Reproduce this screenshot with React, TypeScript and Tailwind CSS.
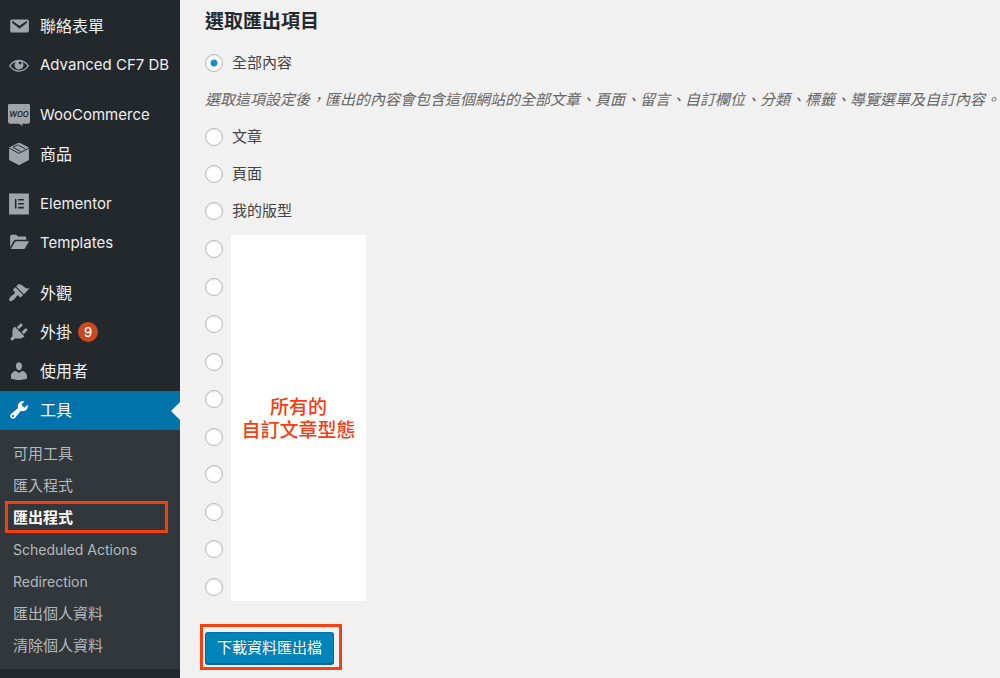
import React, { useState } from "react";
import clsx from "clsx";

interface MenuItem {
    label: string;
    icon: React.ReactNode;
    badge?: number;
}

const Icon = ({ children }: { children: React.ReactNode }) => (
    <svg viewBox="0 0 20 20" className="h-[22px] w-[22px] shrink-0" fill="currentColor" aria-hidden="true">
        {children}
    </svg>
);

// Latin labels are set one step smaller than the Chinese ones
const isLatin = (label: string) => /^[A-Z]/.test(label);

const menuGroups: MenuItem[][] = [
    [
        {
            label: "聯絡表單",
            icon: <path d="M3.87 4h13.25C18.37 4 19 4.59 19 5.79v8.42c0 1.19-.63 1.79-1.88 1.79H3.87c-1.25 0-1.88-.6-1.88-1.79V5.79c0-1.2.63-1.79 1.88-1.79zm6.62 8.6l6.74-5.53c.24-.2.43-.66.13-1.07-.29-.41-.82-.42-1.17-.17l-5.7 3.86L4.8 5.83c-.35-.25-.88-.24-1.17.17-.3.41-.11.87.13 1.07z" />,
        },
        {
            label: "Advanced CF7 DB",
            icon: <path fillRule="evenodd" d="M18.3 9.5C15 4.9 8.5 3.8 3.9 7.2c-1.2.9-2.2 2.1-3 3.4.2.4.5.8.8 1.2 3.3 4.6 9.6 5.6 14.2 2.4.9-.7 1.7-1.4 2.4-2.4.3-.4.5-.8.8-1.2-.3-.4-.5-.8-.8-1.1zm-8.2-2.3c.5-.5 1.3-.5 1.8 0s.5 1.3 0 1.8-1.3.5-1.8 0-.5-1.3 0-1.8zm-.1 7.7c-3.1 0-6-1.6-7.7-4.2C3.5 9 5.1 7.8 7 7.2c-.7.8-1 1.7-1 2.7 0 2.2 1.7 4.1 4 4.1 2.2 0 4.1-1.7 4.1-4v-.1c0-1-.4-2-1.1-2.7 1.9.6 3.5 1.8 4.7 3.5-1.7 2.6-4.6 4.2-7.7 4.2z" />,
        },
    ],
    [
        {
            label: "WooCommerce",
            icon: (
                <>
                    <path d="M2 -.5h16a2 2 0 0 1 2 2v14.500a2 2 0 0 1-2 2h-5.200l.6 2.200-3.400-2.200H2a2 2 0 0 1-2-2V1.500a2 2 0 0 1 2-2z" />
                    <text x="10" y="11.500" textAnchor="middle" fontSize="7" fontWeight="600" fontStyle="italic" fontFamily="Inter, sans-serif" fill="#23282d">WOO</text>
                </>
            ),
        },
        {
            label: "商品",
            icon: (
                <>
                    <path d="M10 -.5l9 4.500v11.500L10 20.200 1 15.500V4z" />
                    <path d="M1 4.600l9 4.900 9-4.900M4.500 4l7 3.700M9.500 2l6 3.300M4.500 4l4.500-2.400" fill="none" stroke="#23282d" strokeWidth=".9" />
                </>
            ),
        },
    ],
    [
        {
            label: "Elementor",
            icon: <path fillRule="evenodd" d="M1 .5h18v19H1zM6.300 5.500V14h1.400V5.500zM9.200 5.500v1.400h5.200V5.500zM9.200 9v1.400h5.200V9zM9.200 12.600V14h5.200v-1.400z" />,
        },
        {
            label: "Templates",
            icon: (
                <>
                    <path d="M2 14V4C2 3.200 2.600 2.500 3.400 2.500h3.800c.8 0 1.300.7 1.600 1.600h6.500c.8 0 1.300.5 1.300 1.300v1.600H7.300c-1 0-1.800.5-2.400 1.400z" />
                    <path d="M2.500 15.400l3.400-5.600c.4-.8 1-1.300 1.900-1.300H19.200l-3.500 5.800c-.4.700-.9 1.100-1.700 1.100z" />
                </>
            ),
        },
    ],
    [
        {
            label: "外觀",
            icon: <path d="M14.48 11.06L7.41 3.99l1.5-1.5c.5-.56 2.3-.47 3.51.32 1.21.8 1.43 1.28 2.91 2.1 1.18.64 2.45 1.26 4.45.85zm-.71.71L6.7 4.7 4.93 6.47c-.39.39-.39 1.02 0 1.41l1.06 1.06c.39.39.39 1.03 0 1.42-.6.6-1.43 1.11-2.21 1.69-.35.26-.7.53-1.01.84C1.43 14.23.4 16.08 1.4 17.07c.99 1 2.84-.03 4.18-1.36.31-.31.58-.66.85-1.02.57-.78 1.08-1.61 1.69-2.21.39-.39 1.02-.39 1.41 0l1.06 1.06c.39.39 1.02.39 1.41 0z" />,
        },
        {
            label: "外掛",
            badge: 9,
            icon: <path d="M13.11 4.36L9.87 7.6 8 5.73l3.24-3.24c.35-.34 1.05-.2 1.56.32.52.51.66 1.21.31 1.55zm-8 1.77l.91-1.12 9.01 9.01-1.19.84c-.71.71-2.63 1.16-3.82 1.16H6.14L4.9 17.26c-.59.59-1.54.59-2.12 0-.59-.58-.59-1.53 0-2.12l1.24-1.24v-3.88c0-1.13.4-3.19 1.09-3.89zm7.26 3.97l3.24-3.24c.34-.35 1.04-.21 1.55.31.52.51.66 1.21.31 1.55l-3.24 3.25z" />,
        },
        {
            label: "使用者",
            icon: <path d="M10 9.25c-2.27 0-2.73-3.44-2.73-3.44C7 4.02 7.82 2 9.97 2c2.16 0 2.98 2.02 2.71 3.81 0 0-.41 3.44-2.68 3.44zm0 2.57L12.72 10c2.39 0 4.52 2.33 4.52 4.53v2.49s-3.65 1.13-7.24 1.13c-3.65 0-7.24-1.13-7.24-1.13v-2.49c0-2.25 1.94-4.48 4.47-4.48z" />,
        },
        {
            label: "工具",
            icon: <path d="M16.68 9.77c-1.34 1.34-3.3 1.67-4.95.99l-5.41 6.52c-.99.99-2.59.99-3.58 0s-.99-2.59 0-3.57l6.52-5.42c-.68-1.65-.35-3.61.99-4.95 1.28-1.28 3.12-1.62 4.72-1.06l-2.89 2.89 2.82 2.82 2.86-2.87c.53 1.58.18 3.39-1.08 4.65zM3.81 16.21c.4.39 1.04.39 1.43 0 .4-.4.4-1.04 0-1.43-.39-.4-1.03-.4-1.43 0-.39.39-.39 1.03 0 1.43z" />,
        },
    ],
];

const subMenu = ["可用工具", "匯入程式", "匯出程式", "Scheduled Actions", "Redirection", "匯出個人資料", "清除個人資料"];

const contentTypes = ["文章", "頁面", "我的版型"];

const customTypes = Array.from({ length: 10 }, (_, i) => `custom-${i}`);

const Sidebar = () => (
    <nav className="w-[180px] shrink-0 bg-[#23282d] pt-[7px]">
        <div className="flex flex-col gap-[11px]">
            {menuGroups.map((group, index) => (
                <ul key={index}>
                    {group.map((item) => {
                        const isActive = item.label === "工具";
                        return (
                            <li key={item.label} className="relative">
                                <a
                                    href="#"
                                    className={clsx(
                                        "flex h-[39px] items-center gap-[10px] pb-px pl-2 leading-5 whitespace-nowrap",
                                        isLatin(item.label) ? "text-[15px]" : "text-[16px]",
                                        isActive ? "bg-[#0073aa] text-white" : "text-[#eeeeee]"
                                    )}
                                >
                                    <span className={isActive ? "text-white" : "text-[#a0a5aa]"}>
                                        <Icon>{item.icon}</Icon>
                                    </span>
                                    <span>{item.label}</span>
                                    {item.badge && (
                                        <span className="-ml-1 flex h-5 w-5 items-center justify-center rounded-full bg-[#ca4a1f] text-[13px] font-medium text-white">
                                            {item.badge}
                                        </span>
                                    )}
                                </a>
                                {isActive && (
                                    <svg viewBox="0 0 9 18" className="absolute top-[11px] right-0 h-[18px] w-[9px]" aria-hidden="true">
                                        <path d="M9 0v18L0 9z" fill="#f1f1f1" />
                                    </svg>
                                )}
                            </li>
                        );
                    })}
                </ul>
            ))}
        </div>
        <ul className="bg-[#32373c] pt-[7px] pb-2">
            {subMenu.map((label) => {
                const isCurrent = label === "匯出程式";
                return (
                    <li key={label} className="relative">
                        <a
                            href="#"
                            className={clsx(
                                "flex h-8 items-center pt-px pl-[13px] leading-5 whitespace-nowrap",
                                isLatin(label) ? "text-[14px]" : "text-[15px]",
                                isCurrent ? "font-bold text-white" : "text-[#b4b9be]"
                            )}
                        >
                            {label}
                        </a>
                        {isCurrent && <span className="pointer-events-none absolute inset-y-0 right-3 left-[5px] border-3 border-[#f7400f]" />}
                    </li>
                );
            })}
        </ul>
    </nav>
);

const radioClass =
    "m-0 h-[18px] w-[18px] shrink-0 appearance-none rounded-full border border-[#b4b9be] bg-white shadow-[inset_0_1px_2px_rgba(0,0,0,0.1)] checked:bg-[radial-gradient(circle,#1e8cbe_3px,#ffffff_4px)]";

interface ContentRadioProps {
    label: string;
    selected: string;
    onSelect: (value: string) => void;
}

const ContentRadio: React.FC<ContentRadioProps> = ({ label, selected, onSelect }) => (
    <label className="flex h-[37px] items-center gap-[9px]">
        <input type="radio" name="content" value={label} className={radioClass} checked={selected === label} onChange={() => onSelect(label)} />
        <span>{label}</span>
    </label>
);

const App: React.FC = () => {
    const [selected, setSelected] = useState("全部內容");

    return (
        <div className="flex min-h-screen bg-[#f1f1f1] font-['Inter','Noto_Sans_CJK_TC',sans-serif] text-[15px] leading-5 text-[#444444]">
            <Sidebar />
            <main className="min-w-0 flex-1 pt-2 pl-[25px]">
                <h2 className="text-[19px] leading-7 font-bold text-[#23282d]">選取匯出項目</h2>
                <form className="pt-2" onSubmit={(e) => e.preventDefault()}>
                    <ContentRadio label="全部內容" selected={selected} onSelect={setSelected} />
                    <p className="flex min-h-[37px] items-center text-[#666666] italic">
                        選取這項設定後，匯出的內容會包含這個網站的全部文章、頁面、留言、自訂欄位、分類、標籤、導覽選單及自訂內容。
                    </p>
                    {contentTypes.map((label) => (
                        <ContentRadio key={label} label={label} selected={selected} onSelect={setSelected} />
                    ))}
                    <div className="mt-[6px] flex gap-2">
                        <div className="flex flex-col justify-between py-[5px]">
                            {customTypes.map((value) => (
                                <input
                                    key={value}
                                    type="radio"
                                    name="content"
                                    value={value}
                                    aria-labelledby="custom-types"
                                    className={radioClass}
                                    checked={selected === value}
                                    onChange={() => setSelected(value)}
                                />
                            ))}
                        </div>
                        <div
                            id="custom-types"
                            className="flex h-[366px] w-[135px] flex-col items-center justify-center bg-white pt-[2px] text-center text-[19px] leading-[23px] font-medium text-[#f93c10]"
                        >
                            <span>所有的</span>
                            <span>自訂文章型態</span>
                        </div>
                    </div>
                    <div className="relative mt-[31px] inline-block">
                        <button
                            type="submit"
                            className="h-8 rounded-[3px] border border-[#006799] border-t-[#0073aa] bg-[#0085ba] px-[11px] text-white shadow-[0_1px_0_#006799] [text-shadow:0_-1px_1px_#006799]"
                        >
                            下載資料匯出檔
                        </button>
                        <span className="pointer-events-none absolute -top-2 -right-2 -bottom-[6px] -left-[5px] border-3 border-[#f7400f]" />
                    </div>
                </form>
            </main>
        </div>
    );
};

export default App;
